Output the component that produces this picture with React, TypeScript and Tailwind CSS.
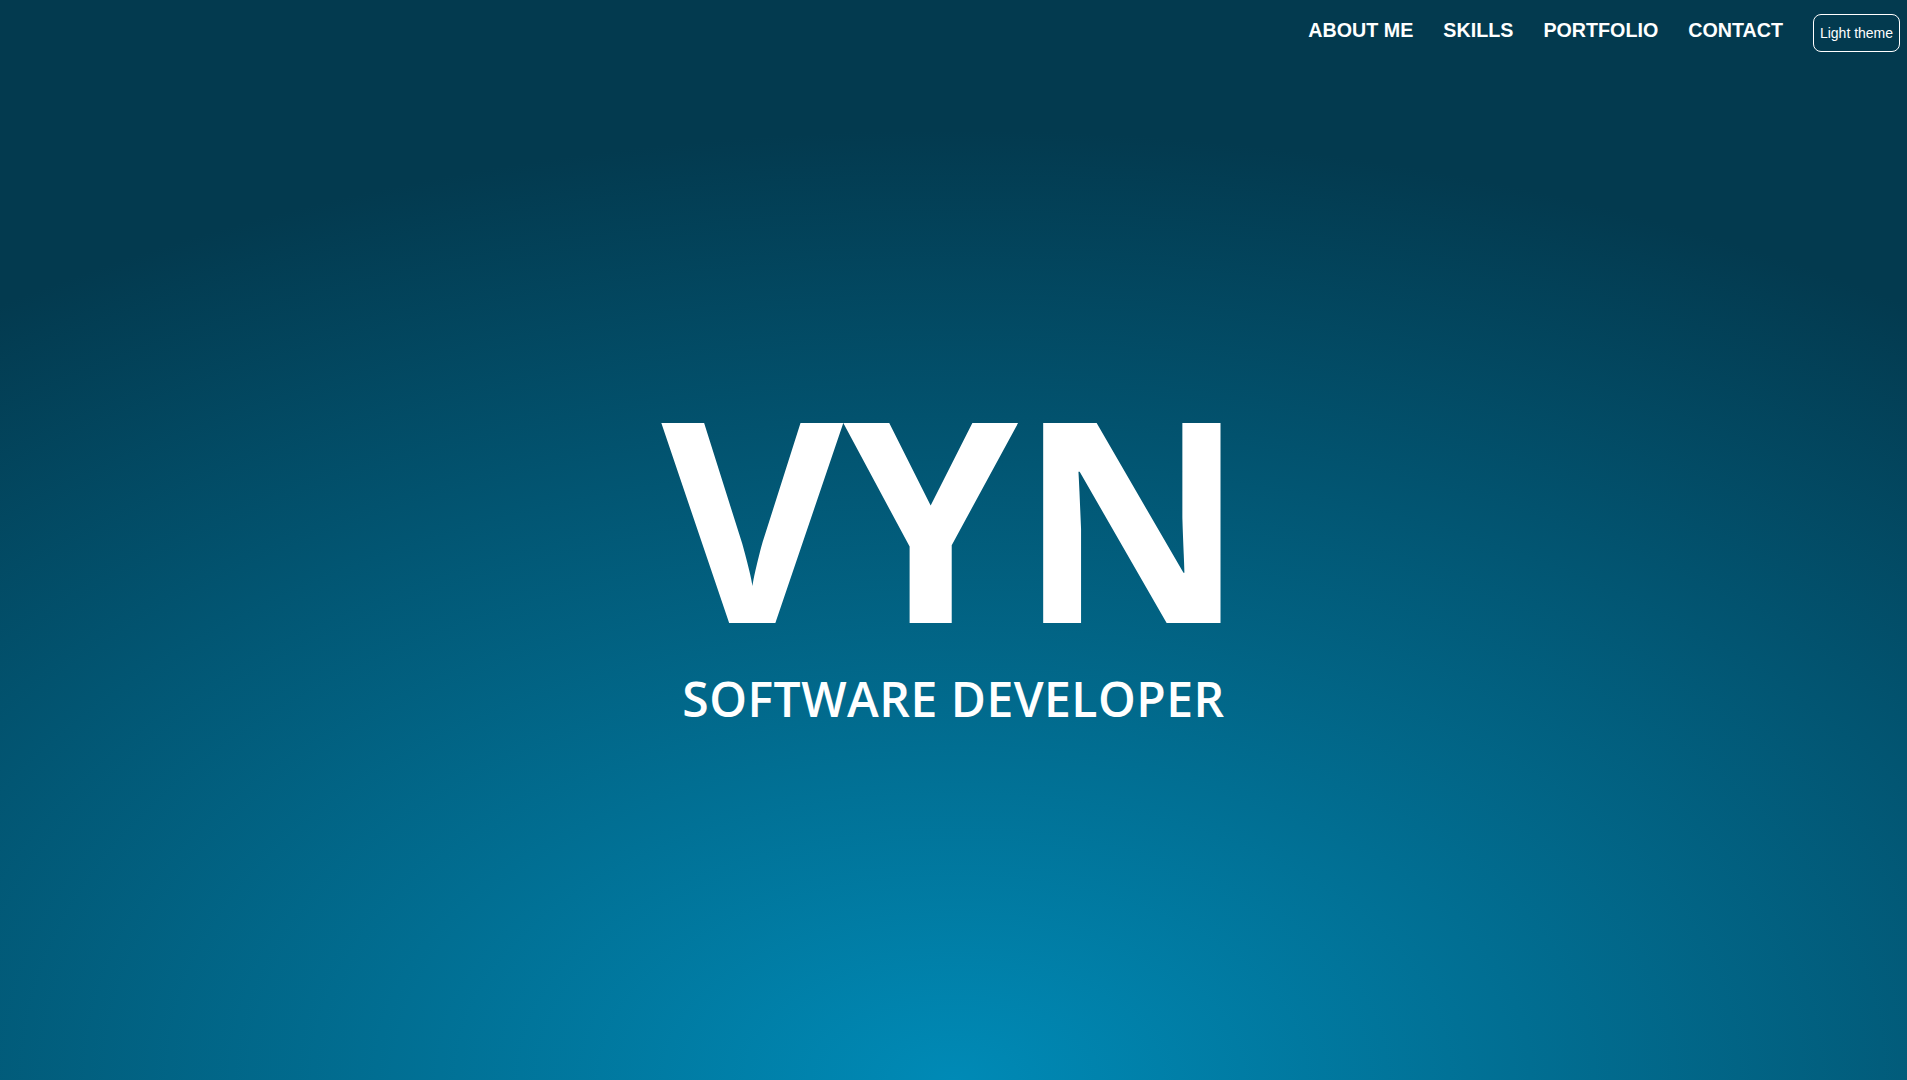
const links = ["ABOUT ME", "SKILLS", "PORTFOLIO", "CONTACT"];

export default function App() {
  return (
    <div className="min-h-screen flex flex-col bg-[#033a4f] bg-[radial-gradient(ellipse_1650px_950px_at_50%_100%,#008ab6_0%,#033a4f_100%)] text-white">
      <header className="flex justify-end items-center pt-[14px] pr-[7px]">
        <nav className="flex items-center gap-[30px] font-['Liberation_Sans',Arial,sans-serif]">
          {links.map((l) => (
            <a key={l} href="#" className="text-[19.7px] font-bold leading-none mb-[4px]">
              {l}
            </a>
          ))}
          <button className="h-[38px] w-[87px] rounded-[8px] border border-white text-[14px] leading-none">
            Light theme
          </button>
        </nav>
      </header>

      <main className="flex-1 flex flex-col items-center font-['Open_Sans',sans-serif]">
        <h1 className="mt-[323px] text-[280px] font-bold leading-[280px]">VYN</h1>
        <p className="mt-[20px] text-[48px] font-semibold leading-none tracking-[0.5px]">SOFTWARE DEVELOPER</p>
      </main>
    </div>
  );
}
